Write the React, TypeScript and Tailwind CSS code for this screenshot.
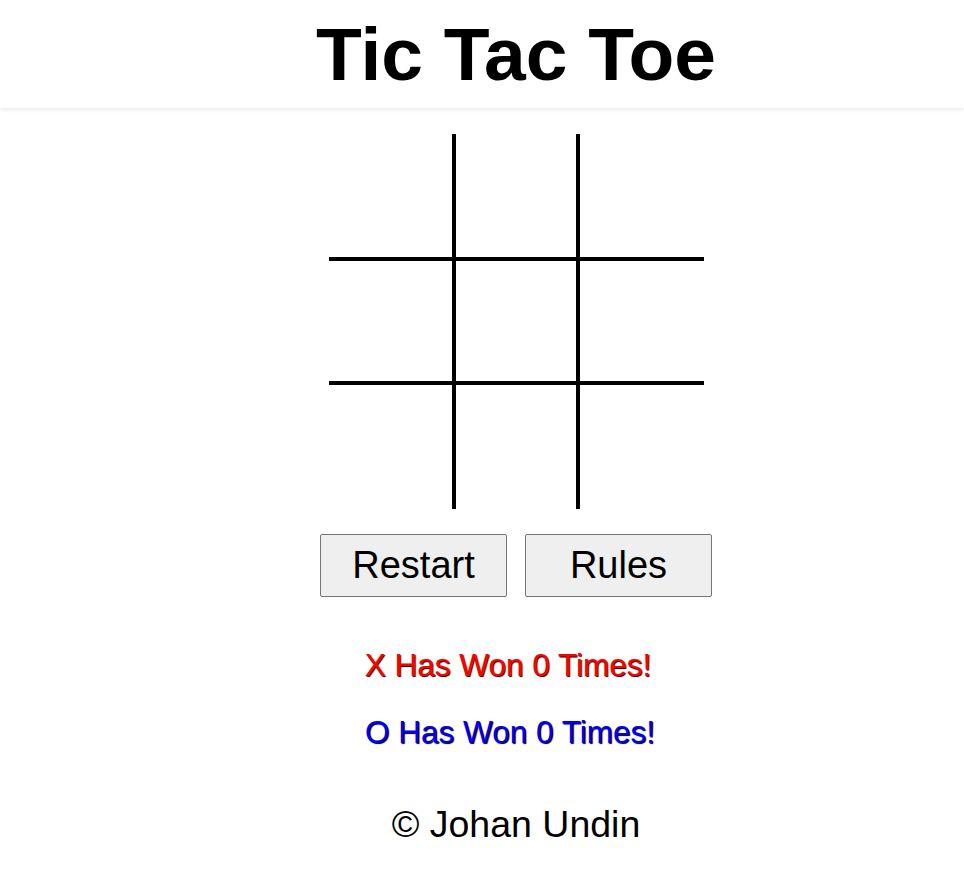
import { useState } from "react";

type Cell = "X" | "O" | null;

const font = { fontFamily: '"Liberation Sans", Arial, sans-serif' };

function cellBorders(i: number) {
  const row = Math.floor(i / 3);
  const col = i % 3;
  const classes: string[] = [];
  if (col === 1) classes.push("border-x-4");
  if (row === 1) classes.push("border-y-4");
  return classes.join(" ");
}

export default function App() {
  const [cells, setCells] = useState<Cell[]>(Array(9).fill(null));
  const [turn, setTurn] = useState<"X" | "O">("X");

  return (
    <div className="min-h-screen bg-white text-black" style={font}>
      <header className="flex h-[108px] items-center justify-center pl-[68px] shadow-[0_2px_4px_rgba(0,0,0,0.08)]">
        <h1 className="text-[75px] font-bold leading-none">Tic Tac Toe</h1>
      </header>

      <main className="flex flex-col items-center pl-[68px]">
        <div className="mt-[26px] grid w-[375px] grid-cols-[123px_128px_124px] grid-rows-[123px_128px_124px]">
          {cells.map((c, i) => (
            <button
              key={i}
              type="button"
              onClick={() => {
                if (c) return;
                const next = [...cells];
                next[i] = turn;
                setCells(next);
                setTurn(turn === "X" ? "O" : "X");
              }}
              className={`flex items-center justify-center border-solid border-black text-[72px] ${cellBorders(i)} ${c === "X" ? "text-[#ff0000]" : "text-[#0000ff]"}`}
            >
              {c}
            </button>
          ))}
        </div>

        <div className="mt-[25px] flex gap-[18px]">
          <button
            type="button"
            onClick={() => setCells(Array(9).fill(null))}
            className="h-[63px] w-[187px] rounded-[2px] border border-[#767676] bg-[#efefef] text-[38px]"
          >
            Restart
          </button>
          <button
            type="button"
            className="h-[63px] w-[187px] rounded-[2px] border border-[#767676] bg-[#efefef] text-[38px]"
          >
            Rules
          </button>
        </div>

        <p className="mt-[50px] -translate-x-[8px] text-[31.5px] leading-[36px] text-[#ff0000] [text-shadow:1px_1px_1px_#000]">
          X Has Won 0 Times!
        </p>
        <p className="mt-[31px] -translate-x-[6px] text-[31.5px] leading-[36px] text-[#0000ff] [text-shadow:1px_1px_1px_#000]">
          O Has Won 0 Times!
        </p>

        <footer className="mt-[53px] text-[37.5px] leading-[42px]">© Johan Undin</footer>
      </main>
    </div>
  );
}
